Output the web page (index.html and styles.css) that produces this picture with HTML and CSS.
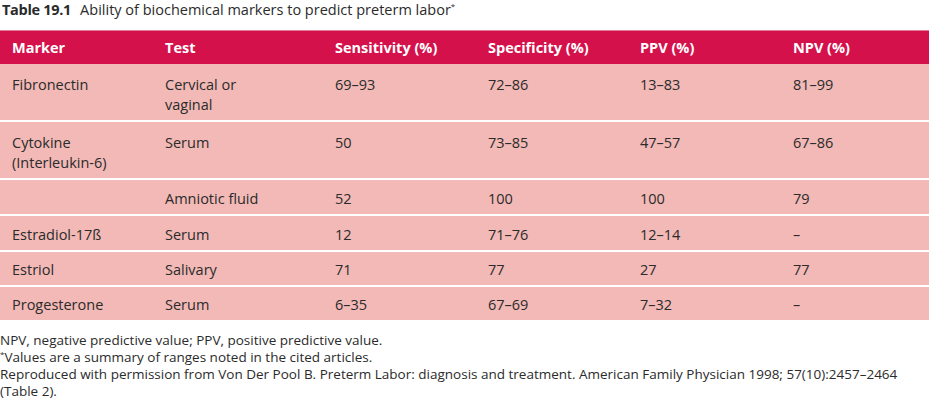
FILE: index.html
```html
<!DOCTYPE html>
<html lang="en">
<head>
<meta charset="utf-8">
<title>Table 19.1</title>
<link rel="stylesheet" href="styles.css">
</head>
<body>
<div class="page">
  <p class="caption"><span class="label">Table 19.1</span><span class="title">Ability of biochemical markers to predict preterm labor<sup>*</sup></span></p>
  <table class="data">
    <colgroup>
      <col class="c1"><col class="c2"><col class="c3"><col class="c4"><col class="c5"><col class="c6">
    </colgroup>
    <thead>
      <tr><th>Marker</th><th>Test</th><th>Sensitivity (%)</th><th>Specificity (%)</th><th>PPV (%)</th><th>NPV (%)</th></tr>
    </thead>
    <tbody>
      <tr class="tall"><td>Fibronectin</td><td>Cervical or<br>vaginal</td><td>69–93</td><td>72–86</td><td>13–83</td><td>81–99</td></tr>
      <tr class="tall"><td>Cytokine<br>(Interleukin-6)</td><td>Serum</td><td>50</td><td>73–85</td><td>47–57</td><td>67–86</td></tr>
      <tr><td></td><td>Amniotic fluid</td><td>52</td><td>100</td><td>100</td><td>79</td></tr>
      <tr><td>Estradiol-17ß</td><td>Serum</td><td>12</td><td>71–76</td><td>12–14</td><td>–</td></tr>
      <tr class="short"><td>Estriol</td><td>Salivary</td><td>71</td><td>77</td><td>27</td><td>77</td></tr>
      <tr class="short"><td>Progesterone</td><td>Serum</td><td>6–35</td><td>67–69</td><td>7–32</td><td>–</td></tr>
    </tbody>
  </table>
  <div class="notes">
    <p>NPV, negative predictive value; PPV, positive predictive value.</p>
    <p><sup>*</sup>Values are a summary of ranges noted in the cited articles.</p>
    <p>Reproduced with permission from Von Der Pool B. Preterm Labor: diagnosis and treatment. American Family Physician 1998; 57(10):2457–2464 <span class="nowrap">(Table 2).</span></p>
  </div>
</div>
</body>
</html>
```
FILE: styles.css
```css
html, body {
  margin: 0;
  padding: 0;
  background: #ffffff;
}
body {
  font-family: "Open Sans", "Noto Sans", "DejaVu Sans", sans-serif;
  color: #2b2b2b;
  width: 929px;
}
.page {
  display: flex;
  flex-direction: column;
}
.caption {
  margin: 0;
  padding: 1px 0 0 2px;
  height: 29px;
  font-size: 14.5px;
  line-height: 18px;
}
.caption .label {
  font-weight: 700;
  margin-right: 9px;
  letter-spacing: -0.3px;
}
.caption sup, .notes sup {
  font-size: 8px;
  vertical-align: top;
  line-height: 10px;
}
.data {
  width: 929px;
  border-collapse: collapse;
  table-layout: fixed;
  font-size: 14.5px;
  line-height: 20px;
}
.c1 { width: 153px; }
.c2 { width: 170px; }
.c3 { width: 153px; }
.c4 { width: 152px; }
.c5 { width: 153px; }
.c6 { width: 148px; }
.data th {
  background: #d5114b;
  color: #ffffff;
  font-weight: 700;
  text-align: left;
  padding: 7px 0 6px 12px;
  border-top: 1px solid #e27b95;
}
.data td {
  background: #f2b9b6;
  padding: 9px 0 5px 12px;
  vertical-align: top;
}
.data tbody tr + tr td {
  border-top: 2px solid #ffffff;
}
.data tr.tall td {
  padding-top: 11px;
  padding-bottom: 5px;
}
.data tr.short td {
  padding-top: 8px;
  padding-bottom: 5px;
}
.notes {
  padding: 12px 0 0 0;
  font-size: 13.5px;
  line-height: 17px;
}
.notes p {
  margin: 0;
}
.nowrap {
  white-space: nowrap;
}
```
